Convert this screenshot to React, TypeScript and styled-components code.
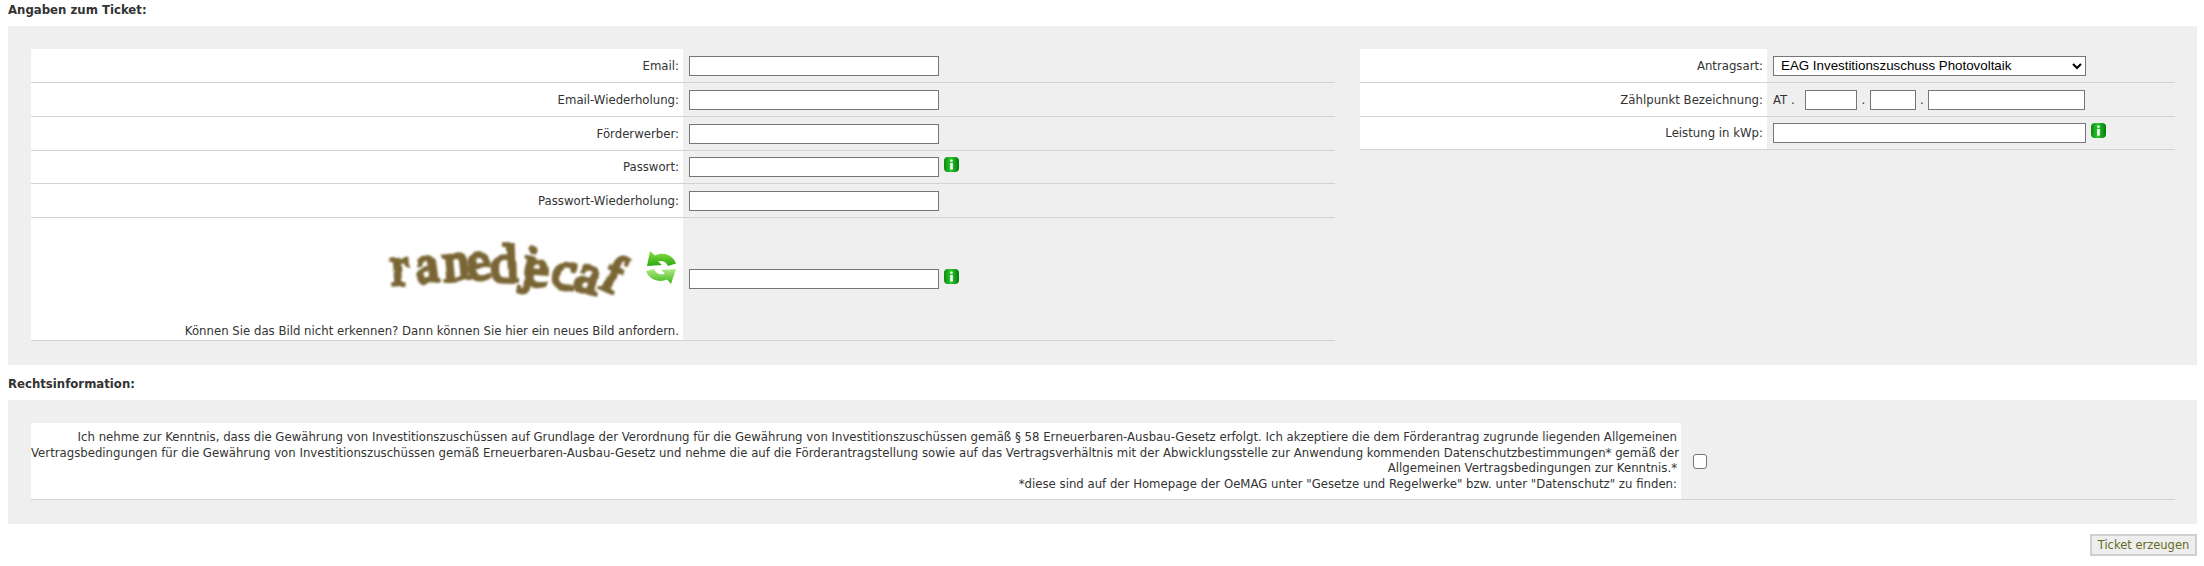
import React from "react";
import styled, { createGlobalStyle } from "styled-components";

const GlobalStyle = createGlobalStyle`
  html, body {
    margin: 0;
    padding: 0;
    background: #fff;
  }
  body {
    font-family: "DejaVu Sans", Verdana, sans-serif;
    font-size: 11.73px;
    color: #333;
  }
`;

const InfoIcon = () => (
  <InfoSvg viewBox="0 0 15 15">
    <defs>
      <linearGradient id="infoGrad" x1="0" y1="0" x2="1" y2="0">
        <stop offset="0" stopColor="#0b8a12" />
        <stop offset="0.45" stopColor="#29c92c" />
        <stop offset="1" stopColor="#067a0c" />
      </linearGradient>
    </defs>
    <rect x="0" y="0" width="15" height="15" rx="4" fill="url(#infoGrad)" />
    <rect x="6.2" y="2.4" width="2.6" height="2.4" rx="1" fill="#fff" />
    <rect x="6.2" y="6" width="2.6" height="6.6" fill="#fff" />
  </InfoSvg>
);

const RefreshIcon = () => (
  <svg width="32" height="34" viewBox="0 0 32 34">
    <defs>
      <linearGradient id="refreshTop" x1="0" y1="0" x2="0" y2="1">
        <stop offset="0" stopColor="#8ee048" />
        <stop offset="1" stopColor="#2aa80f" />
      </linearGradient>
      <linearGradient id="refreshBottom" x1="0" y1="0" x2="0" y2="1">
        <stop offset="0" stopColor="#b4ea86" />
        <stop offset="1" stopColor="#3cb516" />
      </linearGradient>
      <filter id="refreshSoft">
        <feGaussianBlur stdDeviation="0.4" />
      </filter>
    </defs>
    <g filter="url(#refreshSoft)">
      <path d="M5 0 L2 15 L17 14 L13 10.5 C17 9 21 10.5 23 15 L31 12.5 C28 4 18 0.5 10 4.5 Z" fill="url(#refreshTop)" />
      <path d="M26 33 L31 18 L16 19 L20 22.5 C16 24.5 11 23 9 18 L1 20 C4 29 15 32 22 28.5 Z" fill="url(#refreshBottom)" />
    </g>
  </svg>
);

const Captcha = () => (
  <CaptchaSvg width="250" height="66" viewBox="0 0 250 66">
    <defs>
      <filter id="captchaWarp" x="-5%" y="-10%" width="110%" height="120%">
        <feTurbulence type="fractalNoise" baseFrequency="0.05" numOctaves="2" seed="6" />
        <feDisplacementMap in="SourceGraphic" scale="5" xChannelSelector="R" yChannelSelector="G" />
        <feGaussianBlur stdDeviation="0.8" />
      </filter>
    </defs>
    <CaptchaText
      x="10 35 62 87 109 139 142 168 191 216"
      y="50 49 46 46 47 46 50 52 54 52"
      rotate="-4 -8 -6 -8 -2 8 4 8 14 24"
      filter="url(#captchaWarp)"
    >
      ranedjecaf
    </CaptchaText>
  </CaptchaSvg>
);

const fields = ["Email", "Email-Wiederholung", "Förderwerber"];

export default function App() {
  return (
    <Page>
      <GlobalStyle />
      <SectionTitle>Angaben zum Ticket:</SectionTitle>
      <Panel>
        <Columns>
          <LeftTable>
            {fields.map((f) => (
              <Row key={f}>
                <Label $w={652}>{f}:</Label>
                <Value><TextInput $w={250} /></Value>
              </Row>
            ))}
            <Row $h={33}>
              <Label $w={652}>Passwort:</Label>
              <Value><InputGroup><TextInput $w={250} /><InfoIcon /></InputGroup></Value>
            </Row>
            <Row>
              <Label $w={652}>Passwort-Wiederholung:</Label>
              <Value><TextInput $w={250} /></Value>
            </Row>
            <Row $h={123}>
              <CaptchaCell>
                <CaptchaImages>
                  <Captcha />
                  <RefreshIcon />
                </CaptchaImages>
                <span>Können Sie das Bild nicht erkennen? Dann können Sie hier ein neues Bild anfordern.</span>
              </CaptchaCell>
              <Value><InputGroup><TextInput $w={250} /><InfoIcon /></InputGroup></Value>
            </Row>
          </LeftTable>
          <RightTable>
            <Row>
              <Label $w={407}>Antragsart:</Label>
              <Value>
                <TypeSelect defaultValue="pv">
                  <option value="pv">EAG Investitionszuschuss Photovoltaik</option>
                </TypeSelect>
              </Value>
            </Row>
            <Row>
              <Label $w={407}>Zählpunkt Bezeichnung:</Label>
              <Value>
                <Prefix>AT .</Prefix>
                <TextInput $w={52} />
                <Dot>.</Dot>
                <TextInput $w={46} />
                <Dot>.</Dot>
                <TextInput $w={157} />
              </Value>
            </Row>
            <Row $h={33}>
              <Label $w={407}>Leistung in kWp:</Label>
              <Value><InputGroup><TextInput $w={313} /><InfoIcon /></InputGroup></Value>
            </Row>
          </RightTable>
        </Columns>
      </Panel>
      <SectionTitle $top>Rechtsinformation:</SectionTitle>
      <Panel>
        <LegalRow>
          <LegalText>
            Ich nehme zur Kenntnis, dass die Gewährung von Investitionszuschüssen auf Grundlage der Verordnung für die Gewährung von Investitionszuschüssen gemäß § 58 Erneuerbaren-Ausbau-Gesetz erfolgt. Ich akzeptiere die dem Förderantrag zugrunde liegenden Allgemeinen<br />
            Vertragsbedingungen für die Gewährung von Investitionszuschüssen gemäß Erneuerbaren-Ausbau-Gesetz und nehme die auf die Förderantragstellung sowie auf das Vertragsverhältnis mit der Abwicklungsstelle zur Anwendung kommenden Datenschutzbestimmungen* gemäß der<br />
            Allgemeinen Vertragsbedingungen zur Kenntnis.*<br />
            *diese sind auf der Homepage der OeMAG unter "Gesetze und Regelwerke" bzw. unter "Datenschutz" zu finden:
          </LegalText>
          <Accept type="checkbox" />
        </LegalRow>
      </Panel>
      <Actions>
        <SubmitButton type="button">Ticket erzeugen</SubmitButton>
      </Actions>
    </Page>
  );
}

const Page = styled.div`
  padding: 0 7px 10px 8px;
`;

const SectionTitle = styled.h2<{ $top?: boolean }>`
  margin: 0;
  height: ${(p) => (p.$top ? "35px" : "26px")};
  padding-top: ${(p) => (p.$top ? "12px" : "3px")};
  box-sizing: border-box;
  font-size: 11.73px;
  line-height: 14px;
  font-weight: bold;
  color: #333;
`;

const Panel = styled.div`
  background: #efefef;
  padding: 23px 22px 24px 23px;
`;

const Columns = styled.div`
  display: flex;
  gap: 25px;
  align-items: flex-start;
`;

const LeftTable = styled.div`
  width: 1304px;
  flex: none;
`;

const RightTable = styled.div`
  flex: 1;
`;

const Row = styled.div<{ $h?: number }>`
  display: flex;
  height: ${(p) => p.$h ?? 34}px;
  box-sizing: border-box;
  border-bottom: 1px solid #d2d2d2;
`;

const Label = styled.label<{ $w: number }>`
  width: ${(p) => p.$w}px;
  flex: none;
  box-sizing: border-box;
  background: #fff;
  padding-right: 4px;
  display: flex;
  align-items: center;
  justify-content: flex-end;
`;

const CaptchaCell = styled.div`
  width: 652px;
  flex: none;
  box-sizing: border-box;
  background: #fff;
  padding: 17px 4px 2px 0;
  display: flex;
  flex-direction: column;
  align-items: flex-end;
  justify-content: space-between;
`;

const CaptchaImages = styled.div`
  display: flex;
  align-items: center;
  gap: 13px;
  margin-right: 2px;
`;

const CaptchaSvg = styled.svg`
  overflow: visible;
`;

const Value = styled.div`
  flex: 1;
  display: flex;
  align-items: center;
  padding-left: 6px;
`;

const InputGroup = styled.div`
  display: flex;
  align-items: flex-start;
  gap: 5px;
`;

const TextInput = styled.input<{ $w: number }>`
  width: ${(p) => p.$w}px;
  height: 20px;
  box-sizing: border-box;
  border: 1px solid #767676;
  padding: 0 2px;
  background: #fff;
  flex: none;
`;

const InfoSvg = styled.svg`
  width: 15px;
  height: 15px;
  flex: none;
`;

const TypeSelect = styled.select`
  width: 313px;
  height: 20px;
  box-sizing: border-box;
  border: 1px solid #767676;
  padding-left: 3px;
  background: #fff;
  font-family: "Liberation Sans", Arial, sans-serif;
  font-size: 13.33px;
  color: #000;
`;

const Prefix = styled.span`
  width: 32px;
  flex: none;
`;

const Dot = styled.span`
  width: 12.5px;
  flex: none;
  text-align: center;
`;

const CaptchaText = styled.text`
  font-family: "Liberation Serif", "DejaVu Serif", serif;
  font-size: 54px;
  fill: #7a6636;
  stroke: #7a6636;
  stroke-width: 3.5px;
`;

const LegalRow = styled.div`
  display: flex;
  align-items: center;
  height: 77px;
  box-sizing: border-box;
  border-bottom: 1px solid #d2d2d2;
`;

const LegalText = styled.div`
  width: 1650px;
  height: 100%;
  flex: none;
  box-sizing: border-box;
  background: #fff;
  padding: 7px 4px 0 0;
  text-align: right;
  white-space: nowrap;
  line-height: 15.5px;
`;

const Accept = styled.input`
  appearance: none;
  width: 14px;
  height: 15px;
  margin: 0 0 0 12px;
  box-sizing: border-box;
  background: #fff;
  border: 1px solid #767676;
  border-radius: 3px;
`;

const Actions = styled.div`
  display: flex;
  justify-content: flex-end;
  margin-top: 10px;
`;

const SubmitButton = styled.button`
  width: 107px;
  height: 22px;
  box-sizing: border-box;
  padding: 0;
  background: #eeeeee;
  border: 2px solid #cfcfcf;
  font-family: "DejaVu Sans", Verdana, sans-serif;
  font-size: 11.5px;
  color: #666b1e;
`;
